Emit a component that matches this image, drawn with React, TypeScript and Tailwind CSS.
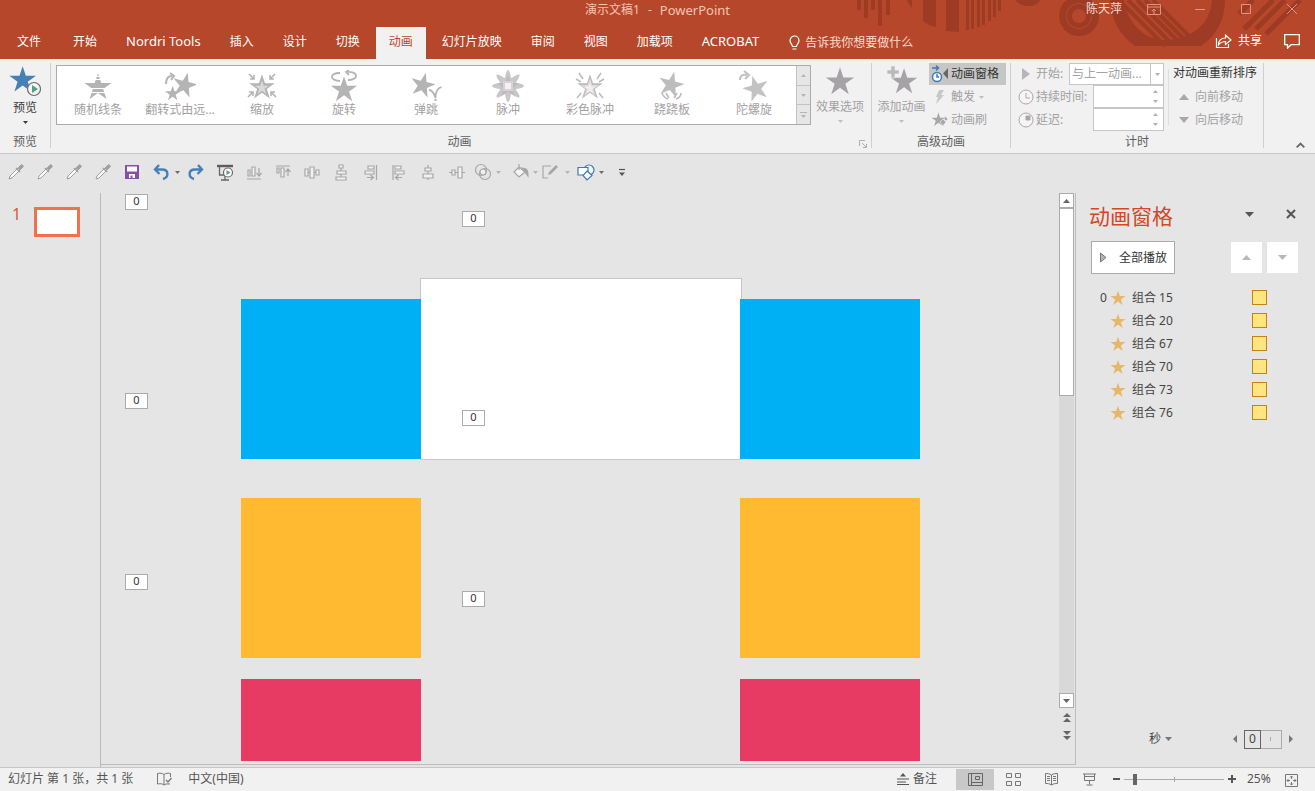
import React, { useState } from "react";
import clsx from "clsx";

const STAR = "M12 1l2.7 8.1h8.6l-7 5.1 2.7 8.3-7-5.1-7 5.1 2.7-8.3-7-5.1h8.6z";

const tabs = [
  { name: "文件" },
  { name: "开始" },
  { name: "Nordri Tools", latin: true },
  { name: "插入" },
  { name: "设计" },
  { name: "切换" },
  { name: "动画" },
  { name: "幻灯片放映" },
  { name: "审阅" },
  { name: "视图" },
  { name: "加载项" },
  { name: "ACROBAT", latin: true },
];

const effects = [
  { name: "随机线条", kind: "bars" },
  { name: "翻转式由远...", kind: "flip" },
  { name: "缩放", kind: "zoom" },
  { name: "旋转", kind: "spin" },
  { name: "弹跳", kind: "bounce" },
  { name: "脉冲", kind: "pulse" },
  { name: "彩色脉冲", kind: "colorPulse" },
  { name: "跷跷板", kind: "teeter" },
  { name: "陀螺旋", kind: "spinner" },
];

const animations = ["组合 15", "组合 20", "组合 67", "组合 70", "组合 73", "组合 76"];

function Star({ size, className }: { size: number; className?: string }) {
  return (
    <svg width={size} height={size} viewBox="0 0 24 24" className={className} fill="currentColor">
      <path d={STAR} />
    </svg>
  );
}

function Caret({ up, className }: { up?: boolean; className?: string }) {
  return (
    <svg width="5" height="3" viewBox="0 0 10 6" className={clsx("shrink-0", className)} fill="currentColor">
      <path d={up ? "M0 6h10L5 0z" : "M0 0h10L5 6z"} />
    </svg>
  );
}

function EffectIcon({ kind }: { kind: string }) {
  return (
    <svg width="32" height="32" viewBox="0 0 32 32" fill="#b4b4b4" stroke="none">
      {kind === "bars" && (
        <>
          <path d={STAR} transform="translate(1.6 2) scale(1.2)" />
          <path d="M8 6.500h16M8 9.500h16M6 18.500h20M6 22.500h20" stroke="#fff" />
        </>
      )}
      {kind === "flip" && (
        <>
          <path d={STAR} transform="translate(8 1) rotate(14 12 12) scale(1.1)" />
          <path d={STAR} transform="translate(.5 15) scale(.68)" />
          <path d="M2 14c0-6 3-8 6-8M6 3l4 3-3 4" fill="none" stroke="#b4b4b4" strokeWidth="2" />
        </>
      )}
      {kind === "zoom" && (
        <>
          <path d={STAR} transform="translate(2.4 3) scale(1.13)" />
          <path d={STAR} transform="translate(8.5 10) scale(.62)" fill="#dcd8dc" />
          <path
            d="M3 4l5 5M8 5v4H4M29 4l-5 5M24 5v4h4M2 27l5-5M3 22h4v4M30 27l-5-5M25 26v-4h4"
            fill="none"
            stroke="#b4b4b4"
            strokeWidth="1.6"
          />
        </>
      )}
      {kind === "spin" && (
        <>
          <path d={STAR} transform="translate(2 5) scale(1.17)" />
          <path d="M18 2c6-.5 10 1 10 4s-5 4-8 4M12 3C7 3 4 4.500 4 7s4 4 8 4M21 0l-3 2 3 3" fill="none" stroke="#b4b4b4" strokeWidth="1.8" />
        </>
      )}
      {kind === "bounce" && (
        <>
          <path d={STAR} transform="translate(0 1) rotate(14 12 12) scale(1.1)" />
          <path d="M19 20c3 0 5 3 6.500 8 0-7 2-10 6-11" fill="none" stroke="#b4b4b4" strokeWidth="1.8" />
          <path d="M24.500 29h2v2h-2z" />
        </>
      )}
      {kind === "pulse" && (
        <>
          <g fill="#cac7cb">
            {[0, 45, 90, 135].map((a) => (
              <ellipse key={a} cx="16" cy="16" rx="3.4" ry="16" transform={`rotate(${a} 16 16)`} />
            ))}
            <circle cx="16" cy="16" r="9" />
          </g>
          <path d={STAR} transform="translate(4 4)" fill="#bdbabe" />
          <path d="M11 11h10v10H11z" fill="#d6d2d6" />
          <path d="M13 13h6v6h-6z" fill="#f6f0f2" />
        </>
      )}
      {kind === "colorPulse" && (
        <>
          <path d={STAR} transform="translate(2.4 3) scale(1.13)" fill="#bbb" />
          <path d={STAR} transform="translate(6 7.5) scale(.82)" fill="#dedade" />
          <path d={STAR} transform="translate(10 12) scale(.5)" fill="#f4eef0" />
          <path d="M5 3l4 6M27 3l-4 6M2 9l5 3M30 9l-5 3M3 28l4-5M29 28l-4-5" fill="none" stroke="#bbb" strokeWidth="1.5" />
        </>
      )}
      {kind === "teeter" && (
        <>
          <path d={STAR} transform="translate(2 0) rotate(14 12 12) scale(1.14)" fill="#bdbdbd" />
          <path d="M6 23c1 3 3 5 6 6M10 23l3 5M25 23c0 3-2 5-5 6M21 23l-3 5" fill="none" stroke="#bdbdbd" strokeWidth="1.6" />
        </>
      )}
      {kind === "spinner" && (
        <>
          <path d={STAR} transform="translate(4 4) rotate(-16 14 14) scale(1.15)" fill="#c2c2c2" />
          <path d="M2 10c0-4 2-6 7-5M6 1l5 4-4 4" fill="none" stroke="#c2c2c2" strokeWidth="2" />
        </>
      )}
    </svg>
  );
}

function HeaderArt() {
  return (
    <svg className="pointer-events-none absolute top-0 right-0" width="460" height="59" viewBox="0 0 460 59" fill="#9e3b25">
      <path d="M2 0h4v10H2zM9 0h4v18H9zM16 0h4v10h-4zM23 0h4v26h-4zM31 0h4v15h-4z" />
      <path d="M52 0h5v8c-2-2-4-5-5-8zM68 0h13v27c-5-1-9-3-13-6zM91 0h13v32c-5 0-9-1-13-1z" />
      <path d="M111 0h3v30h-3zM116 0h3v29h-3zM122 0h3v27h-3zM127 0h3v25h-3zM133 0h3v21h-3zM138 0h3v17h-3zM143 0h3v11h-3z" />
      <path d="M161 0h24c-3 8-20 8-24 0z" />
      <circle cx="224" cy="16" r="16.500" fill="none" stroke="#9e3b25" strokeWidth="7" />
      <circle cx="224" cy="16" r="9.500" fill="none" stroke="#9e3b25" strokeWidth="5" />
      <path d="M255 0h14c2 18 17 40 40 40s46-12 48-40h13c0 20-9 36-24 46h-66c-15-11-24-26-25-46z" />
      <g stroke="#9e3b25" strokeWidth="5" fill="none">
        <path d="M264 0l46 46M273 0l42 42M282 0l41 41M290 0l39 39M298 0l38 38" strokeWidth="4" />
        <path d="M384 14L398 0M389 29l29-29M401 29l29-29M411 34l34-34" />
      </g>
    </svg>
  );
}

function Dropper() {
  return (
    <svg width="16" height="16" viewBox="0 0 16 16" fill="none" stroke="#a3a0a3">
      <path d="M1 15l1-3 8-8 2 2-8 8z" fill="#fafafa" />
      <path d="M8 4l4 4" strokeWidth="1.6" />
      <path d="M10 4l3-3c1-1 3 1 2 2l-3 3z" fill="#a3a0a3" />
    </svg>
  );
}

function QatIcon({ kind }: { kind: string }) {
  return (
    <svg width="18" height="18" viewBox="0 0 18 18" fill="none" stroke="#a8a6a8" strokeWidth="1.200">
      {kind === "save" && (
        <>
          <path d="M2 2h14v14H2z" fill="#8450a5" stroke="none" />
          <path d="M4 3.500h10v5H4zM6 11h6v4H9.500v-2.500h-2V15H6z" fill="#fff" stroke="none" />
        </>
      )}
      {kind === "undo" && <path d="M7 2L3 6.500 7.500 11M3.500 6.500H10c7 0 7 8 1 9.500" stroke="#4580b8" strokeWidth="2.400" />}
      {kind === "redo" && <path d="M11 2l4 4.500L10.500 11M14.500 6.500H8c-7 0-7 8-1 9.500" stroke="#4580b8" strokeWidth="2.400" />}
      {kind === "show" && (
        <>
          <path d="M1 3h16" stroke="#5c5c5c" strokeWidth="2.400" />
          <path d="M3.500 4v8H8M5 17h8M9 13v4" stroke="#666" strokeWidth="1.300" />
          <circle cx="12" cy="9.500" r="4.500" fill="#fff" stroke="#666" />
          <path d="M10.500 7l4 2.500-4 2.500z" fill="#53a086" stroke="none" />
        </>
      )}
      <g fill="#f2f2f2" stroke="#a8a6a8">
        {kind === "bottom" && (
          <>
            <path d="M3 7h2v6H3zM7 4h3v9H7z" />
            <path d="M2 16h14M14 5v7M11.500 10l2.500 3 2.500-3" fill="none" />
          </>
        )}
        {kind === "top" && (
          <>
            <path d="M3 5h2v5H3zM7 5h3v9H7z" />
            <path d="M2 3h14M14 13V6M11.500 9L14 6l2.500 3" fill="none" />
          </>
        )}
        {kind === "middle" && <path d="M2 6h3v7H2zM7 4h4v11H7zM13 7h3v5h-3zM5 9.500h2M11 9.500h2" />}
        {kind === "distribute" && <path d="M7 2h4v3H7zM5 8h9v3H5zM4 14h10v3H4zM9 5v3M9 11v3" />}
        {kind === "right" && (
          <>
            <path d="M7 3h6v3H7zM4 8h9v3H4z" />
            <path d="M15.500 2v15M6 14.500h6M9.500 12l3 2.500-3 2.500" fill="none" />
          </>
        )}
        {kind === "left" && (
          <>
            <path d="M5 3h6v3H5zM5 8h9v3H5z" />
            <path d="M3 2v15M6 14.500h6M8.500 12l-3 2.500 3 2.500" fill="none" />
          </>
        )}
        {kind === "center" && <path d="M6 5h6v3H6zM4 11h10v4H4zM9 2v3M9 8v3M9 15v2" />}
        {kind === "spread" && <path d="M4 7h3v5H4zM10 4h4v11h-4zM1 9.500h3M7 9.500h3M14 9.500h3" />}
      </g>
      {kind === "union" && (
        <>
          <circle cx="7" cy="7" r="5.500" />
          <circle cx="11" cy="11" r="5.500" />
          <circle cx="9" cy="9" r="3" fill="#f0f0f0" />
        </>
      )}
      {kind === "fill" && (
        <>
          <path d="M2 9l5-5 6 5-6 5zM7 7V1" fill="#f4f4f4" />
          <path d="M10 5l4 1c2 1 2 4 2 7l-3-4z" fill="#a8a6a8" />
        </>
      )}
      {kind === "outline" && (
        <>
          <path d="M10 3H2v12h5" />
          <path d="M7 12l1-3 7-7 2 2-7 7z" fill="#a8a6a8" stroke="none" />
        </>
      )}
      {kind === "shapes" && (
        <>
          <circle cx="12" cy="7" r="5" fill="#eef3f8" stroke="#3f7ab2" />
          <path d="M1 4.500h10v7.500H1z" fill="#fff" stroke="#3f7ab2" />
          <path d="M10 8l5 4.500L10 17l-4-4.500z" fill="#fff" stroke="#3f7ab2" />
        </>
      )}
      {kind === "more" && (
        <>
          <path d="M6 6.500h6" stroke="#555" />
          <path d="M6 9.500h6l-3 3.500z" fill="#555" stroke="none" />
        </>
      )}
    </svg>
  );
}

function QatButton({ kind, label, className }: { kind: string; label: string; className: string }) {
  return (
    <button type="button" aria-label={label} className={clsx("flex justify-center", className)}>
      <QatIcon kind={kind} />
    </button>
  );
}

function Clock({ filled }: { filled?: boolean }) {
  return (
    <svg width="16" height="16" viewBox="0 0 16 16" fill="#f8f4f6" stroke="#aba8ab" className="shrink-0">
      <circle cx="8" cy="8" r="7" />
      {filled ? <path d="M8 4v4h4V4z" fill="#a8a5a8" /> : <path d="M8 4v5h4" fill="none" />}
    </svg>
  );
}

function GroupLabel({ children }: { children: React.ReactNode }) {
  return <div className="mt-auto text-center leading-3 text-[#5e5e5e]">{children}</div>;
}

function TitleBar() {
  return (
    <div className="grid h-[27px] grid-cols-[1fr_auto_1fr] text-[#f6c3b5]">
      <div />
      <h1 className="flex gap-2 leading-5">
        <span>演示文稿1</span>
        <span>-</span>
        <span className="text-[13px]">PowerPoint</span>
      </h1>
      <div className="flex h-[18px] items-center justify-end">
        <span className="mr-[9px] text-[#fbdcd2]">陈天萍</span>
        <button type="button" aria-label="功能区显示选项" className="flex w-[46px] justify-center">
          <svg width="14" height="12" viewBox="0 0 14 12" fill="none" stroke="#dc9583">
            <path d="M.5 1.500h13v10H.5zM.5 4h13M7 11V6M5 8l2-2 2 2" />
          </svg>
        </button>
        <button type="button" aria-label="最小化" className="flex w-[46px] justify-center">
          <svg width="10" height="10" viewBox="0 0 10 10" stroke="#dc9583">
            <path d="M0 5.500h10" />
          </svg>
        </button>
        <button type="button" aria-label="最大化" className="flex w-[46px] justify-center">
          <svg width="10" height="10" viewBox="0 0 10 10" fill="none" stroke="#dc9583">
            <path d="M.5.500h9v9h-9z" />
          </svg>
        </button>
        <button type="button" aria-label="关闭" className="flex w-[46px] justify-center">
          <svg width="10" height="10" viewBox="0 0 10 10" stroke="#dc9583">
            <path d="M0 0l10 10M10 0L0 10" />
          </svg>
        </button>
      </div>
    </div>
  );
}

function TabBar() {
  const [active, setActive] = useState("动画");
  return (
    <nav className="flex h-8 items-center text-white">
      <div className="flex h-full gap-[3px] pl-1">
        {tabs.map(({ name, latin }) => (
          <button
            key={name}
            type="button"
            onClick={() => setActive(name)}
            className={clsx(
              "px-[13px] pb-[2px] first:mr-[3px]",
              latin && "text-[13px]",
              name === active && "bg-[#f1f1f1] text-[#b7472a]"
            )}
          >
            {name}
          </button>
        ))}
      </div>
      <button type="button" className="ml-4 flex items-center gap-1 text-[#fbdcd2]">
        <svg width="13" height="16" viewBox="0 0 13 16" fill="none" stroke="#fff" strokeWidth="1.200">
          <path d="M4.500 11.500c0-2-2.500-3-2.500-6a4.500 4.500 0 019 0c0 3-2.500 4-2.500 6zM4.500 14h4" />
        </svg>
        告诉我你想要做什么
      </button>
      <div className="ml-auto flex items-center gap-[22px] pr-[15px] pb-1">
        <button type="button" className="flex items-center gap-[6px]">
          <svg width="17" height="16" viewBox="0 0 17 16" fill="none" stroke="#fff" strokeWidth="1.200">
            <path d="M1.500 5v9.500h12V11" />
            <path d="M3.500 12c0-5 3-7 7-7V2l5.500 5-5.500 4.500V8.500c-3 0-5 1-7 3.500z" />
          </svg>
          共享
        </button>
        <button type="button" aria-label="批注">
          <svg width="16" height="15" viewBox="0 0 16 15" fill="none" stroke="#fff" strokeWidth="1.300">
            <path d="M.7.700h14.600v10H7l-3.500 3.500v-3.500H.7z" />
          </svg>
        </button>
      </div>
    </nav>
  );
}

function Ribbon() {
  return (
    <section className="flex h-[95px] border-b border-[#c6c6c6] bg-[#f1f1f1] pt-1 pb-[5px] text-[#a3a1a3]">
      <div className="flex w-[51px] flex-col border-r border-[#cfcfcf]">
        <button type="button" className="flex flex-col items-center text-[#3c3c3c]">
          <svg width="32" height="34" viewBox="0 0 32 34">
            <path d={STAR} transform="translate(-.5 2) scale(1.18)" fill="#4580b8" />
            <circle cx="25" cy="26" r="6.500" fill="#f4f4f4" stroke="#6c6c6c" strokeWidth="1.200" />
            <path d="M23 22l6 4-6 4z" fill="#53a086" />
          </svg>
          <span className="mt-[3px] leading-4">预览</span>
          <Caret className="mt-[5px]" />
        </button>
        <GroupLabel>预览</GroupLabel>
      </div>

      <div className="flex w-[821px] flex-col border-r border-[#cfcfcf] pl-[5px]">
        <div className="flex">
          <div className="mt-[2px] flex h-[60px] w-[755px] border border-[#ababab] bg-white">
            <div className="flex">
              {effects.map((effect) => (
                <button key={effect.kind} type="button" className="flex w-[82px] flex-col items-center pt-1">
                  <EffectIcon kind={effect.kind} />
                  <span className="leading-4 whitespace-nowrap">{effect.name}</span>
                </button>
              ))}
            </div>
            <div className="ml-auto flex w-[14px] flex-col divide-y divide-[#c3c3c3] border-l border-[#c3c3c3] bg-[#e6e6e6] text-[#b5b5b5]">
              <button type="button" aria-label="上一行" className="flex flex-1 items-center justify-center">
                <Caret up />
              </button>
              <button type="button" aria-label="下一行" className="flex flex-1 items-center justify-center">
                <Caret />
              </button>
              <button type="button" aria-label="其他" className="flex flex-1 flex-col items-center justify-center gap-[2px]">
                <span className="h-px w-[7px] bg-[#b5b5b5]" />
                <Caret />
              </button>
            </div>
          </div>
          <button type="button" className="flex flex-1 flex-col items-center pt-[3px] pr-[2px]">
            <Star size={30} className="text-[#a5a3a5]" />
            <span className="mt-[3px] leading-4">效果选项</span>
            <Caret className="mt-[5px] text-[#c0c0c0]" />
          </button>
        </div>
        <div className="mt-auto flex items-end leading-3 text-[#5e5e5e]">
          <span className="flex-1 pl-1 text-center">动画</span>
          <button type="button" aria-label="动画设置" className="mr-1">
            <svg width="8" height="8" viewBox="0 0 8 8" fill="none" stroke="#b0b0b0">
              <path d="M.5 6V.500H6M3 3l4 4M7.500 4v3.500H4" />
            </svg>
          </button>
        </div>
      </div>

      <div className="flex w-[139px] flex-col border-r border-[#cfcfcf]">
        <div className="flex">
          <button type="button" className="flex w-[57px] flex-col items-center pt-[3px] pl-[2px]">
            <svg width="32" height="30" viewBox="0 0 32 30" fill="#a5a3a5">
              <path d={STAR} transform="translate(4 1) scale(1.17)" />
              <path d="M5 0h4v4h4v4H9v4H5V8H1V4h4z" fill="#bbb9bb" stroke="#f1f1f1" strokeWidth=".6" />
            </svg>
            <span className="mt-[3px] leading-4 whitespace-nowrap">添加动画</span>
            <Caret className="mt-[5px] text-[#c0c0c0]" />
          </button>
          <div className="flex flex-col">
            <button type="button" className="flex h-[22px] w-[77px] items-center bg-[#c6c6c6] pl-[2px] text-[#333]">
              <svg width="20" height="18" viewBox="0 0 20 18" fill="none">
                <circle cx="6" cy="12" r="4.500" fill="#fff" stroke="#3f7ab2" strokeWidth="1.500" />
                <path d="M6 9v3h2M1 3h6M5 .5L7.500 3 5 5.500" stroke="#3f7ab2" strokeWidth="1.500" />
                <path d="M17 3v11l-5-5.500z" fill="#666" />
              </svg>
              动画窗格
            </button>
            <button type="button" className="flex h-6 items-center pl-[2px]">
              <svg width="20" height="16" viewBox="0 0 20 16" fill="#c9c7c9">
                <path d="M8 1h5l-3 5h3L5 15l2-7H5z" />
              </svg>
              触发
              <Caret className="ml-1 text-[#c0c0c0]" />
            </button>
            <button type="button" className="flex h-[22px] items-center pl-[2px]">
              <svg width="20" height="16" viewBox="0 0 20 16" fill="#a9a7a9">
                <path d={STAR} transform="translate(0 0) scale(.62)" />
                <path d="M9 10l3-3 3 3-3 4zM14 4l3 3-2 2-2-2z" stroke="#f1f1f1" strokeWidth=".6" />
              </svg>
              动画刷
            </button>
          </div>
        </div>
        <GroupLabel>高级动画</GroupLabel>
      </div>

      <div className="flex w-[253px] flex-col border-r border-[#cfcfcf]">
        <div className="flex">
          <div className="flex w-[153px] flex-col pl-[7px]">
            <div className="flex h-[22px] items-center">
              <svg width="16" height="14" viewBox="0 0 16 14" fill="#b7b5b7">
                <path d="M4 1l8 6-8 6z" />
              </svg>
              <label htmlFor="start" className="ml-[2px] w-8 whitespace-nowrap">
                开始:
              </label>
              <div className="relative ml-auto h-[22px] w-[95px]">
                <select id="start" className="h-full w-full appearance-none border border-[#c6c6c6] bg-white pl-[2px]">
                  <option>与上一动画...</option>
                </select>
                <span className="pointer-events-none absolute inset-y-0 right-0 flex w-[14px] items-center justify-center border border-[#c6c6c6]">
                  <Caret className="text-[#b0b0b0]" />
                </span>
              </div>
            </div>
            <div className="flex h-[23px] items-center">
              <Clock />
              <label htmlFor="duration" className="ml-[2px] whitespace-nowrap">
                持续时间:
              </label>
              <div className="relative ml-auto h-[23px] w-[71px]">
                <input id="duration" className="h-full w-full border border-[#c6c6c6] bg-white pr-4 pl-1" />
                <span className="pointer-events-none absolute inset-y-1 right-[6px] flex flex-col justify-between py-px text-[#b0b0b0]">
                  <Caret up />
                  <Caret />
                </span>
              </div>
            </div>
            <div className="flex h-[23px] items-center">
              <Clock filled />
              <label htmlFor="delay" className="ml-[2px]">
                延迟:
              </label>
              <div className="relative ml-auto h-[23px] w-[71px]">
                <input id="delay" className="h-full w-full border border-[#c6c6c6] bg-white pr-4 pl-1" />
                <span className="pointer-events-none absolute inset-y-1 right-[6px] flex flex-col justify-between py-px text-[#b0b0b0]">
                  <Caret up />
                  <Caret />
                </span>
              </div>
            </div>
          </div>
          <div className="mt-[6px] ml-1 flex h-14 flex-col border-l border-[#dedede] pl-1">
            <span className="flex h-2 shrink-0 items-center text-[#333]">对动画重新排序</span>
            <button type="button" className="mt-2 flex h-[23px] shrink-0 items-center gap-[6px] pl-[6px]">
              <svg width="10" height="6" viewBox="0 0 10 6" fill="#a9a7a9"><path d="M0 6h10L5 0z" /></svg>
              向前移动
            </button>
            <button type="button" className="flex h-[23px] shrink-0 items-center gap-[6px] pl-[6px]">
              <svg width="10" height="6" viewBox="0 0 10 6" fill="#a9a7a9"><path d="M0 0h10L5 6z" /></svg>
              向后移动
            </button>
          </div>
        </div>
        <GroupLabel>计时</GroupLabel>
      </div>

      <button type="button" aria-label="折叠功能区" className="mt-auto mr-[10px] ml-auto">
        <svg width="9" height="6" viewBox="0 0 9 6" fill="none" stroke="#666" strokeWidth="1.800">
          <path d="M.7 5.300L4.500 1.500l3.800 3.800" />
        </svg>
      </button>
    </section>
  );
}

function QuickAccess() {
  return (
    <div className="flex h-9 items-center pl-px text-[#6a6a6a]">
      {[1, 2, 3, 4].map((n) => (
        <button key={n} type="button" aria-label={`取色器 ${n}`} className="flex w-[29px] justify-center">
          <Dropper />
        </button>
      ))}
      <QatButton kind="save" label="保存" className="w-[29px]" />
      <QatButton kind="undo" label="撤消" className="w-[29px]" />
      <Caret />
      <QatButton kind="redo" label="恢复" className="ml-px w-[29px]" />
      <QatButton kind="show" label="从头开始" className="w-[29px]" />
      <QatButton kind="bottom" label="底端对齐" className="w-[29px]" />
      <QatButton kind="top" label="顶端对齐" className="w-[29px]" />
      <QatButton kind="middle" label="垂直居中" className="w-[29px]" />
      <QatButton kind="distribute" label="纵向分布" className="w-[29px]" />
      <QatButton kind="right" label="右对齐" className="w-[29px]" />
      <QatButton kind="left" label="左对齐" className="w-[29px]" />
      <QatButton kind="center" label="水平居中" className="w-[29px]" />
      <QatButton kind="spread" label="横向分布" className="w-[29px]" />
      <QatButton kind="union" label="合并形状" className="w-6" />
      <Caret className="ml-px text-[#b5b5b5]" />
      <QatButton kind="fill" label="形状填充" className="ml-2 w-6" />
      <Caret className="text-[#b5b5b5]" />
      <QatButton kind="outline" label="形状轮廓" className="w-6" />
      <Caret className="ml-[3px] text-[#b5b5b5]" />
      <QatButton kind="shapes" label="形状" className="ml-1 w-6" />
      <Caret className="ml-px" />
      <QatButton kind="more" label="自定义快速访问工具栏" className="ml-2 w-5" />
    </div>
  );
}

function Tag({ className }: { className: string }) {
  return (
    <span
      className={clsx(
        "absolute flex h-4 w-[23px] items-center justify-center border border-[#ababab] bg-white pb-px text-[11px] text-[#333]",
        className
      )}
    >
      0
    </span>
  );
}

function SlideCanvas() {
  return (
    <div className="mb-[2px] flex min-w-0 flex-1 flex-col border-b border-[#bdbdbd]">
      <div className="relative mb-[3px] flex-1 overflow-hidden">
        <div className="absolute top-[85px] left-[319px] h-[182px] w-[322px] border border-[#c6c6c6] bg-white" />
        <div className="absolute top-[106px] left-[140px] h-40 w-[180px] bg-[#00b0f4]" />
        <div className="absolute top-[106px] left-[639px] h-40 w-[180px] bg-[#00b0f4]" />
        <div className="absolute top-[305px] left-[140px] h-40 w-[180px] bg-[#ffba31]" />
        <div className="absolute top-[305px] left-[639px] h-40 w-[180px] bg-[#ffba31]" />
        <div className="absolute top-[486px] left-[140px] h-40 w-[180px] bg-[#e73b63]" />
        <div className="absolute top-[486px] left-[639px] h-40 w-[180px] bg-[#e73b63]" />
        <Tag className="top-px left-6" />
        <Tag className="top-[18px] left-[361px]" />
        <Tag className="top-[200px] left-6" />
        <Tag className="top-[217px] left-[361px]" />
        <Tag className="top-[381px] left-6" />
        <Tag className="top-[398px] left-[361px]" />
      </div>
    </div>
  );
}

function ScrollBar() {
  return (
    <div className="mb-[2px] flex w-[17px] shrink-0 flex-col border-r border-b border-[#bdbdbd] pr-px text-[#666]">
      <button type="button" aria-label="向上滚动" className="flex h-[15px] items-center justify-center border border-[#ababab] bg-white">
        <svg width="7" height="4" viewBox="0 0 7 4" fill="currentColor"><path d="M0 4h7L3.500 0z" /></svg>
      </button>
      <div className="flex flex-1 flex-col bg-[#d9d8d9]">
        <div className="grow-[5] border border-[#ababab] bg-white" />
        <div className="grow-[8]" />
      </div>
      <button type="button" aria-label="向下滚动" className="flex h-[15px] items-center justify-center border border-[#ababab] bg-white">
        <svg width="7" height="4" viewBox="0 0 7 4" fill="currentColor"><path d="M0 0h7L3.500 4z" /></svg>
      </button>
      <button type="button" aria-label="上一张幻灯片" className="flex h-[18px] items-center justify-center">
        <svg width="8" height="9" viewBox="0 0 8 9" fill="currentColor"><path d="M0 4h8L4 0zM0 9h8L4 5z" /></svg>
      </button>
      <button type="button" aria-label="下一张幻灯片" className="mb-5 flex h-[18px] items-center justify-center">
        <svg width="8" height="9" viewBox="0 0 8 9" fill="currentColor"><path d="M0 0h8L4 4zM0 5h8L4 9z" /></svg>
      </button>
    </div>
  );
}

function AnimationPane() {
  return (
    <aside className="flex w-[239px] shrink-0 flex-col text-[#444]">
      <div className="mt-[9px] flex h-7 items-center pr-[19px] pl-[13px]">
        <h2 className="text-[21px] leading-7 text-[#d24726]">动画窗格</h2>
        <button type="button" aria-label="任务窗格选项" className="mr-8 mb-1 ml-auto">
          <svg width="9" height="5" viewBox="0 0 9 5" fill="#555"><path d="M0 0h9L4.500 5z" /></svg>
        </button>
        <button type="button" aria-label="关闭窗格" className="mb-1">
          <svg width="10" height="10" viewBox="0 0 10 10" stroke="#555" strokeWidth="2"><path d="M1 1l8 8M9 1L1 9" /></svg>
        </button>
      </div>
      <div className="mt-[11px] flex items-center pr-[17px] pl-[15px]">
        <button type="button" className="flex h-[33px] w-[84px] items-center border border-[#ababab] bg-white pl-2 whitespace-nowrap text-[#333]">
          <svg width="7" height="11" viewBox="0 0 7 11" fill="#b4b4b4" stroke="#777" className="mr-3">
            <path d="M.5 1v9L6 5.500z" />
          </svg>
          全部播放
        </button>
        <button type="button" aria-label="上移" className="ml-auto flex h-[31px] w-[31px] items-center justify-center bg-white">
          <svg width="9" height="5" viewBox="0 0 9 5" fill="#b9b7b9"><path d="M0 5h9L4.500 0z" /></svg>
        </button>
        <button type="button" aria-label="下移" className="ml-[5px] flex h-[31px] w-[31px] items-center justify-center bg-white">
          <svg width="9" height="5" viewBox="0 0 9 5" fill="#b9b7b9"><path d="M0 0h9L4.500 5z" /></svg>
        </button>
      </div>
      <ul className="mt-3 pr-12 pl-6">
        {animations.map((name, i) => (
          <li key={name} className="flex h-[23px] items-center">
            <span className="w-[10px]">{i === 0 && "0"}</span>
            <Star size={16} className="text-[#e8b668]" />
            <span className="ml-[6px]">{name}</span>
            <span className="ml-auto h-[15px] w-[15px] border border-[#c9810f] bg-[#ffe680]" />
          </li>
        ))}
      </ul>
      <div className="mt-auto mb-[18px] flex h-5 items-center pr-[22px] pl-[73px]">
        <button type="button" className="flex items-center gap-1">
          秒
          <svg width="7" height="4" viewBox="0 0 7 4" fill="#777"><path d="M0 0h7L3.500 4z" /></svg>
        </button>
        <button type="button" aria-label="后退" className="ml-auto">
          <svg width="4" height="8" viewBox="0 0 4 8" fill="#777"><path d="M4 0v8L0 4z" /></svg>
        </button>
        <div className="mx-[7px] flex h-[19px] w-[38px] border border-[#ababab]">
          <span className="-m-px flex w-[17px] items-center justify-center border border-[#666]">0</span>
          <span className="mx-auto mt-[6px] h-1 w-px bg-[#ababab]" />
        </div>
        <button type="button" aria-label="前进">
          <svg width="4" height="8" viewBox="0 0 4 8" fill="#777"><path d="M0 0v8l4-4z" /></svg>
        </button>
      </div>
    </aside>
  );
}

function StatusBar() {
  const [zoom, setZoom] = useState(25);
  return (
    <footer className="flex h-6 items-center border-t border-[#c6c6c6] bg-[#f1f1f1] pb-px pl-2 text-[#555]">
      <span>幻灯片 第 1 张，共 1 张</span>
      <button type="button" aria-label="拼写检查" className="ml-6">
        <svg width="15" height="14" viewBox="0 0 15 14" fill="none" stroke="#777">
          <path d="M7 2.500C5 1 3 1 .5 1.500V12c2.500-.5 4.500-.5 6.500 1M7 2.500V13c1-1 3-1.300 6-1M7 2.500C8.500 1 11 1 13.500 1.500V5" />
          <path d="M9 8l2 2 3.500-4" strokeWidth="1.300" />
        </svg>
      </button>
      <button type="button" className="ml-4">中文(中国)</button>
      <button type="button" className="ml-auto flex items-center gap-1 whitespace-nowrap">
        <svg width="12" height="12" viewBox="0 0 12 12" fill="#555">
          <path d="M6 0l3 3.500H3zM0 5.500h12v1H0zM0 8.500h9v1H0zM0 11h12v1H0z" />
        </svg>
        备注
      </button>
      <div className="ml-[19px] flex h-[21px]">
        <button type="button" aria-label="普通视图" className="flex w-[38px] items-center justify-center bg-[#c9c8c9]">
          <svg width="15" height="13" viewBox="0 0 15 13" fill="none" stroke="#666">
            <path d="M.5.500h14v12H.5zM3.500.500v12M3.500 9.500h11M7.500 3.500h4v3h-4z" />
          </svg>
        </button>
        <button type="button" aria-label="幻灯片浏览" className="flex w-[38px] items-center justify-center">
          <svg width="15" height="13" viewBox="0 0 15 13" fill="none" stroke="#777">
            <path d="M.5.500h5v4h-5zM9.500.500h5v4h-5zM.5 8.500h5v4h-5zM9.500 8.500h5v4h-5z" />
          </svg>
        </button>
        <button type="button" aria-label="阅读视图" className="flex w-[38px] items-center justify-center">
          <svg width="13" height="13" viewBox="0 0 13 13" fill="none" stroke="#777">
            <path d="M6.500 2C4.500.500 2.500.500.500.500v10c2 0 4 0 6 1.500 2-1.500 4-1.500 6-1.500V.500c-2 0-4 0-6 1.500zV12M2 3.500h3M2 5.500h3M2 7.500h3M8 3.500h3M8 5.500h3M8 7.500h3" />
          </svg>
        </button>
        <button type="button" aria-label="幻灯片放映" className="flex w-[38px] items-center justify-center">
          <svg width="13" height="13" viewBox="0 0 13 13" fill="none" stroke="#777">
            <path d="M0 1h13M1.500 3.500h10M1.500 1v6.500h10V1M6.500 7.500v4M3.500 12h6" />
          </svg>
        </button>
      </div>
      <button type="button" aria-label="缩小" className="ml-[5px] flex h-4 w-[7px] items-center">
        <span className="h-[2px] w-full bg-[#555]" />
      </button>
      <div className="relative mx-1 flex h-4 w-[100px] items-center">
        <span className="absolute inset-x-0 h-px bg-[#ababab]" />
        <span className="absolute left-1/2 h-[5px] w-px bg-[#ababab]" />
        <input
          type="range"
          aria-label="显示比例"
          min={10}
          max={170}
          value={zoom}
          onChange={(e) => setZoom(Number(e.target.value))}
          className="relative h-3 w-full appearance-none bg-transparent [&::-webkit-slider-thumb]:h-[11px] [&::-webkit-slider-thumb]:w-1 [&::-webkit-slider-thumb]:appearance-none [&::-webkit-slider-thumb]:bg-[#666]"
        />
      </div>
      <button type="button" aria-label="放大" className="flex">
        <svg width="8" height="8" viewBox="0 0 8 8" stroke="#555" strokeWidth="2"><path d="M0 4h8M4 0v8" /></svg>
      </button>
      <span className="ml-[11px] w-[29px]">{zoom}%</span>
      <button type="button" aria-label="适应窗口" className="mr-[17px] ml-[9px] pt-[2px]">
        <svg width="13" height="13" viewBox="0 0 13 13" fill="none" stroke="#777">
          <path d="M.5.500h12v12H.5zM6.500 2v3M5 3.500L6.500 2 8 3.500M6.500 11V8M5 9.500L6.500 11 8 9.500M2 6.500h3M3.500 5L2 6.500 3.500 8M11 6.500H8M9.500 5L11 6.500 9.500 8" />
        </svg>
      </button>
    </footer>
  );
}

export default function App() {
  return (
    <div className="flex min-h-screen flex-col bg-[#e5e5e5] font-['Noto_Sans','Noto_Sans_CJK_SC',sans-serif] text-xs">
      <header className="relative bg-[#b7472a]">
        <HeaderArt />
        <div className="relative">
          <TitleBar />
          <TabBar />
        </div>
      </header>
      <Ribbon />
      <QuickAccess />
      <main className="mt-[3px] flex flex-1">
        <div className="flex w-[101px] shrink-0 items-start border-r border-[#b9b9b9] pl-3">
          <span className="mt-[11px] w-[22px] text-base leading-5 text-[#d8593a]">1</span>
          <button type="button" aria-label="幻灯片 1" className="mt-[14px] h-[30px] w-[46px] border-[3px] border-[#f0704f] bg-white" />
        </div>
        <SlideCanvas />
        <ScrollBar />
        <AnimationPane />
      </main>
      <StatusBar />
    </div>
  );
}
